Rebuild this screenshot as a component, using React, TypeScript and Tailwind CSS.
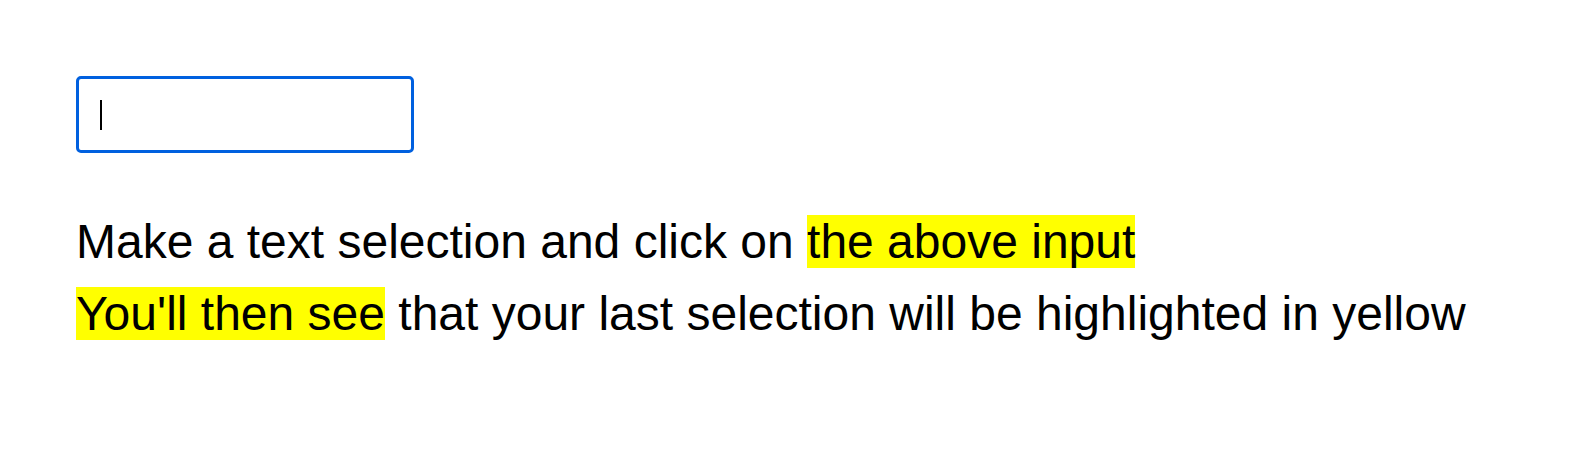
export default function App() {
  return (
    <div className="min-h-[462px] w-full bg-white pl-[76px] pt-[76px] text-black" style={{ fontFamily: '"Liberation Sans", Arial, sans-serif' }}>
      <div className="flex h-[77px] w-[338px] items-center rounded-[5px] border-[3px] border-[#0060df] pl-[21px]">
        <span className="block h-[30px] w-[2px] bg-black" />
      </div>
      <div className="mt-[53px] text-[48px] leading-[72px]">
        <div>
          Make a text selection and click on <span className="bg-[#ffff00]">the above input</span>
        </div>
        <div>
          <span className="bg-[#ffff00]">You'll then see</span> that your last selection will be highlighted in yellow
        </div>
      </div>
    </div>
  );
}
